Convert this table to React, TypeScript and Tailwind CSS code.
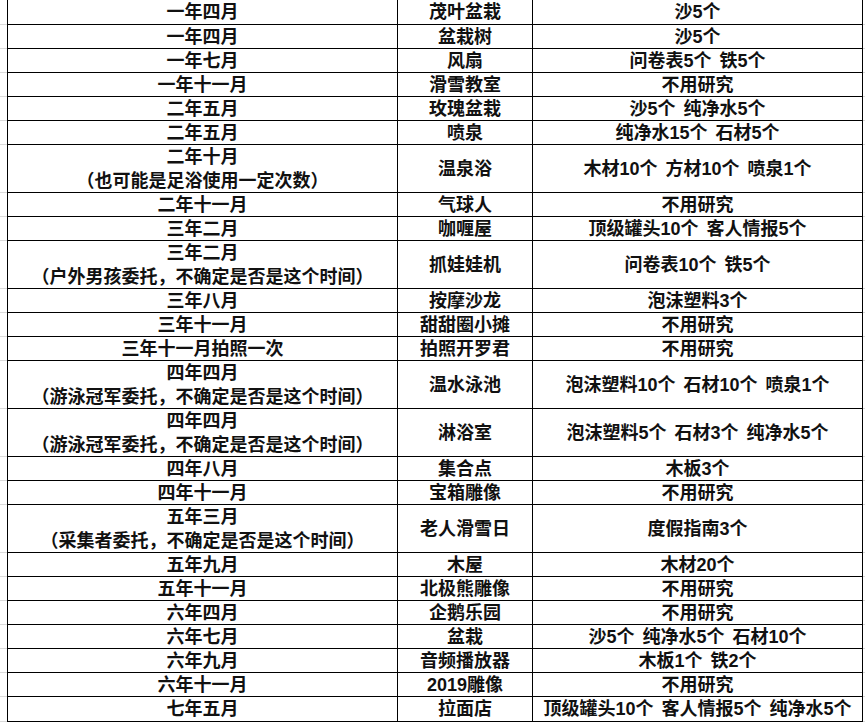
import React from "react";

type Row = [string, string, string];

const rows: Row[] = [
  ["一年四月", "茂叶盆栽", "沙5个"],
  ["一年四月", "盆栽树", "沙5个"],
  ["一年七月", "风扇", "问卷表5个 铁5个"],
  ["一年十一月", "滑雪教室", "不用研究"],
  ["二年五月", "玫瑰盆栽", "沙5个 纯净水5个"],
  ["二年五月", "喷泉", "纯净水15个 石材5个"],
  ["二年十月\n（也可能是足浴使用一定次数）", "温泉浴", "木材10个 方材10个 喷泉1个"],
  ["二年十一月", "气球人", "不用研究"],
  ["三年二月", "咖喱屋", "顶级罐头10个 客人情报5个"],
  ["三年二月\n（户外男孩委托，不确定是否是这个时间）", "抓娃娃机", "问卷表10个 铁5个"],
  ["三年八月", "按摩沙龙", "泡沫塑料3个"],
  ["三年十一月", "甜甜圈小摊", "不用研究"],
  ["三年十一月拍照一次", "拍照开罗君", "不用研究"],
  ["四年四月\n（游泳冠军委托，不确定是否是这个时间）", "温水泳池", "泡沫塑料10个 石材10个 喷泉1个"],
  ["四年四月\n（游泳冠军委托，不确定是否是这个时间）", "淋浴室", "泡沫塑料5个 石材3个 纯净水5个"],
  ["四年八月", "集合点", "木板3个"],
  ["四年十一月", "宝箱雕像", "不用研究"],
  ["五年三月\n（采集者委托，不确定是否是这个时间）", "老人滑雪日", "度假指南3个"],
  ["五年九月", "木屋", "木材20个"],
  ["五年十一月", "北极熊雕像", "不用研究"],
  ["六年四月", "企鹅乐园", "不用研究"],
  ["六年七月", "盆栽", "沙5个 纯净水5个 石材10个"],
  ["六年九月", "音频播放器", "木板1个 铁2个"],
  ["六年十一月", "2019雕像", "不用研究"],
  ["七年五月", "拉面店", "顶级罐头10个 客人情报5个 纯净水5个"],
];

export default function App() {
  return (
    <div
      className="w-[865px] h-[722px] bg-white text-[#111] font-bold text-[18px] leading-[22px] overflow-hidden"
      style={{ fontFamily: '"Liberation Sans", "Noto Sans CJK SC", sans-serif' }}
    >
      {rows.map((r, i) => {
        const first = i === 0;
        const last = i === rows.length - 1;
        const two = r[0].includes("\n");
        const tb = `${first ? "" : "border-t"} ${last ? "border-b" : ""}`;
        const h = two ? "h-[48px]" : last ? "h-[25px]" : "h-[24px]";
        return (
          <div key={i} className={`grid grid-cols-[7px_390px_135px_331px_2px] ${h}`}>
            <div className={`${tb} border-[#d9d9d9]`} />
            <div className={`${tb} border-l border-black flex items-center justify-center text-center whitespace-pre-line leading-[24px]`}>
              {r[0]}
            </div>
            <div className={`${tb} border-l border-black flex items-center justify-center text-center whitespace-nowrap`}>
              {r[1]}
            </div>
            <div className={`${tb} border-l border-r border-black flex items-center justify-center text-center whitespace-nowrap [word-spacing:3px]`}>
              {r[2]}
            </div>
            <div className={`${tb} border-[#d9d9d9]`} />
          </div>
        );
      })}
    </div>
  );
}
